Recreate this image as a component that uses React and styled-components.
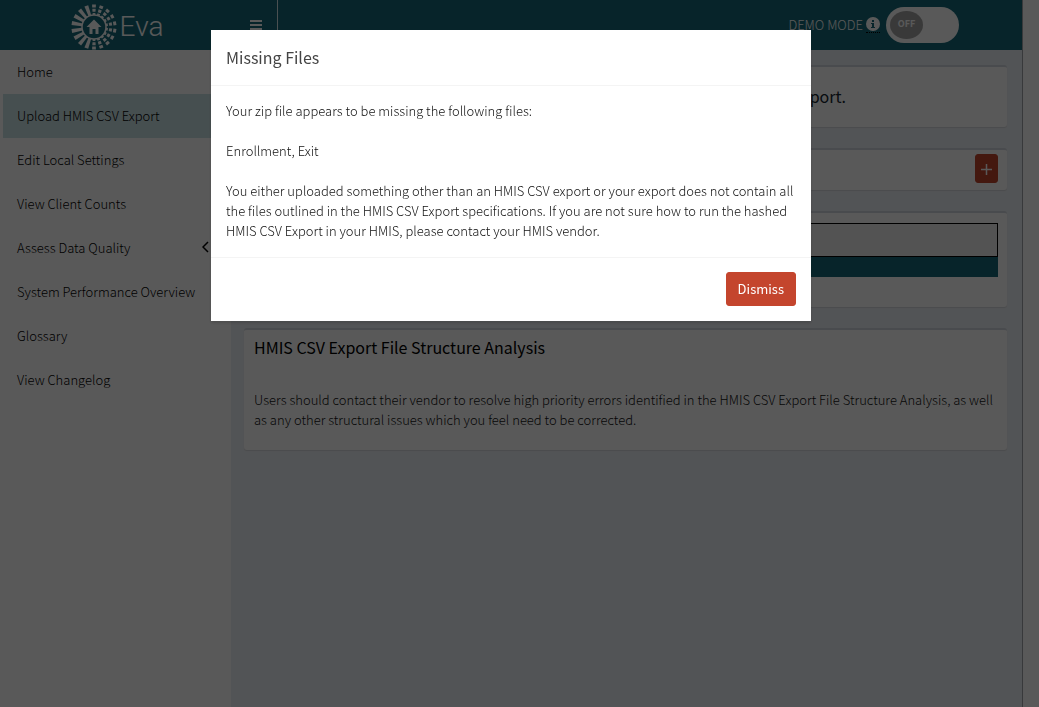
import React from "react";
import styled, { createGlobalStyle } from "styled-components";

const GlobalStyle = createGlobalStyle`
  *, *::before, *::after { box-sizing: border-box; }
  html { height: 100%; }
  body {
    margin: 0;
    min-height: 100%;
    background: #ffffff;
    color: #111111;
    font-family: "Source Sans Pro", "Noto Sans CJK SC", "Open Sans", sans-serif;
    font-size: 13px;
    font-weight: 300;
    line-height: 20px;
  }
  h1, h2, p { margin: 0; font-size: inherit; font-weight: inherit; }
  button, input { font: inherit; }
`;

const Page = styled.div`
  display: flex;
  flex-direction: column;
  min-height: 100vh;
  margin-right: 16px;
  border-right: 1px solid #a0a4a8;
`;

const Header = styled.header`
  display: flex;
  height: 50px;
  background: #16697a;
  color: #ffffff;
`;

const Brand = styled.a`
  display: flex;
  align-items: center;
  justify-content: center;
  gap: 3px;
  width: 232px;
  padding: 3px 0 0 2px;
  color: inherit;
  font-family: Roboto, sans-serif;
  font-size: 28px;
  font-weight: 300;
  text-decoration: none;
`;

const Navbar = styled.div`
  display: flex;
  flex: 1;
  justify-content: space-between;
`;

const MenuButton = styled.button`
  display: flex;
  align-items: center;
  justify-content: center;
  width: 46px;
  padding: 0 0 0 2px;
  border: 0;
  border-right: 1px solid #d5e4e7;
  background: transparent;
  color: inherit;
`;

const DemoMode = styled.div`
  display: flex;
  align-items: center;
  gap: 3px;
  padding-right: 63px;
`;

const InfoMark = styled.span`
  display: flex;
  padding-bottom: 1px;
  border-bottom: 1px dotted #000000;
`;

const Switch = styled.label`
  display: flex;
  align-items: center;
  width: 73px;
  height: 36px;
  margin-left: 3px;
  padding: 0 4px;
  border-radius: 18px;
  background: #ffffff;
`;

const SwitchInput = styled.input`
  position: absolute;
  opacity: 0;
`;

const Knob = styled.span`
  display: flex;
  align-items: center;
  justify-content: center;
  width: 33px;
  height: 28px;
  padding-bottom: 2px;
  border-radius: 50%;
  background: #a4a4a4;
  color: #ffffff;
  font-size: 9px;
  font-weight: 700;
`;

const Body = styled.div`
  display: flex;
  flex: 1;
`;

const Sidebar = styled.nav`
  flex: 0 0 231px;
  background: #ffffff;
`;

const NavLink = styled.a`
  display: flex;
  align-items: center;
  justify-content: space-between;
  height: 44px;
  padding: 0 22px 0 14px;
  border-left: 3px solid transparent;
  background: ${(p) => (p.$active ? "#c9e1e5" : "transparent")};
  background-clip: padding-box;
  color: #000000;
  text-decoration: none;
`;

const Main = styled.main`
  display: flex;
  flex: 1;
  flex-direction: column;
  gap: 21px;
  min-width: 0;
  padding: 15px 15px 15px 13px;
  background: #ecf0f5;
`;

const Box = styled.section`
  padding: ${(p) => p.$pad || "10px"};
  border-top: 2px solid #d2d6de;
  border-radius: 3px;
  background: #ffffff;
  box-shadow: 0 1px 1px rgba(0, 0, 0, 0.1);
`;

const BoxTitle = styled.h2`
  color: #000000;
  font-size: 16px;
  font-weight: 400;
  line-height: 20px;
`;

const Intro = styled(BoxTitle)`
  padding: 9px 0 11px;
  color: #16262f;
  text-align: center;
`;

const CollapsedHeader = styled.div`
  display: flex;
  justify-content: flex-end;
`;

const ExpandButton = styled.button`
  display: flex;
  align-items: center;
  justify-content: center;
  width: 23px;
  height: 29px;
  padding: 1px 0 0;
  border: 1px solid #c4452d;
  border-radius: 3px;
  background: #c4452d;
  color: #ffffff;
`;

const FileInput = styled.input`
  display: block;
  width: 100%;
  height: 34px;
  padding: 6px 12px;
  border: 1px solid #000000;
  background: #eeeeee;
`;

const Progress = styled.div`
  height: 20px;
  background: #16697a;
`;

const BoxText = styled.p`
  padding-top: 33px;
`;

const Overlay = styled.div`
  position: fixed;
  inset: 0;
  display: flex;
  align-items: flex-start;
  justify-content: center;
  padding: 30px 17px 30px 0;
  background: rgba(0, 0, 0, 0.65);
`;

const Dialog = styled.div`
  width: 600px;
  max-width: 100%;
  background: #ffffff;
  box-shadow: 0 2px 3px rgba(0, 0, 0, 0.15);
`;

const DialogHeader = styled.div`
  padding: 17px 15px 18px;
  border-bottom: 1px solid #f4f4f4;
`;

const DialogTitle = styled.h1`
  color: #444444;
  font-size: 16px;
  font-weight: 400;
`;

const DialogBody = styled.div`
  display: flex;
  flex-direction: column;
  gap: 20px;
  padding: 15px 15px 16px;
`;

const DialogFooter = styled.div`
  display: flex;
  justify-content: flex-end;
  padding: 14px 15px 15px;
  border-top: 1px solid #f4f4f4;
`;

const DismissButton = styled.button`
  height: 34px;
  padding: 0 11px;
  border: 1px solid #c4452d;
  border-radius: 3px;
  background: #c4452d;
  color: #ffffff;
  font-weight: 400;
`;

const RAYS = 18;

function SunLogo() {
  return (
    <svg width="46" height="46" viewBox="-23 -23 46 46" aria-hidden="true">
      <circle r="12" fill="none" stroke="currentColor" strokeWidth="1.500" />
      {Array.from({ length: RAYS }, (_, i) => {
        const angle = (i * 360) / RAYS;
        const segmented = angle < 190;
        return (
          <path
            key={angle}
            d={
              segmented
                ? "M-1.300-12H1.300L1.400-14H-1.400ZM-1.500-15.200H1.500L1.700-18.200H-1.700ZM-1.800-19.500H1.800L1.900-22.500H-1.900Z"
                : "M-1.400-12H1.400L2-22.500H-2Z"
            }
            fill="currentColor"
            transform={`rotate(${angle})`}
          />
        );
      })}
      <path d="M0-7.500 7.500 0H4.500V7H1.500V2H-1.500V7H-4.500V0H-7.500Z" fill="currentColor" />
    </svg>
  );
}

function Bars() {
  return (
    <svg width="12" height="12" viewBox="0 0 12 12" aria-hidden="true">
      <path d="M0 2H12M0 6H12M0 10H12" stroke="currentColor" strokeWidth="2" />
    </svg>
  );
}

function InfoIcon() {
  return (
    <svg width="14" height="14" viewBox="0 0 14 14" aria-hidden="true">
      <circle cx="7" cy="7" r="7" fill="#ffffff" />
      <path d="M6 3H8V5H6ZM5 6H8V10H9V11H5V10H6V7H5Z" fill="#16697a" />
    </svg>
  );
}

function ChevronLeft() {
  return (
    <svg width="7" height="14" viewBox="0 0 7 14" aria-hidden="true">
      <path d="M6 1 1 6 6 11" fill="none" stroke="currentColor" strokeWidth="1.500" />
    </svg>
  );
}

function Plus() {
  return (
    <svg width="11" height="11" viewBox="0 0 11 11" aria-hidden="true">
      <path d="M5.500 0V11M0 5.500H11" stroke="currentColor" strokeWidth="1.500" />
    </svg>
  );
}

const NAV_ITEMS = [
  { label: "Home" },
  { label: "Upload HMIS CSV Export", active: true },
  { label: "Edit Local Settings" },
  { label: "View Client Counts" },
  { label: "Assess Data Quality", expandable: true },
  { label: "System Performance Overview" },
  { label: "Glossary" },
  { label: "View Changelog" },
];

export default function App() {
  return (
    <>
      <GlobalStyle />
      <Page>
        <Header>
          <Brand href="#home">
            <SunLogo />
            Eva
          </Brand>
          <Navbar>
            <MenuButton type="button" aria-label="Toggle navigation">
              <Bars />
            </MenuButton>
            <DemoMode>
              <span>DEMO MODE</span>
              <InfoMark>
                <InfoIcon />
              </InfoMark>
              <Switch>
                <SwitchInput type="checkbox" aria-label="Demo mode" />
                <Knob>OFF</Knob>
              </Switch>
            </DemoMode>
          </Navbar>
        </Header>
        <Body>
          <Sidebar>
            {NAV_ITEMS.map((item) => (
              <NavLink key={item.label} href="#" $active={item.active}>
                {item.label}
                {item.expandable && <ChevronLeft />}
              </NavLink>
            ))}
          </Sidebar>
          <Main>
            <Box>
              <Intro>To get started, please upload your hashed HMIS CSV Export.</Intro>
            </Box>
            <Box $pad="4px 9px 7px">
              <CollapsedHeader>
                <ExpandButton type="button" aria-label="Expand">
                  <Plus />
                </ExpandButton>
              </CollapsedHeader>
            </Box>
            <Box $pad="10px 9px 30px">
              <FileInput type="text" readOnly aria-label="Selected file" />
              <Progress />
            </Box>
            <Box $pad="7px 10px 20px">
              <BoxTitle>HMIS CSV Export File Structure Analysis</BoxTitle>
              <BoxText>
                Users should contact their vendor to resolve high priority errors identified in the
                HMIS CSV Export File Structure Analysis, as well as any other structural issues which
                you feel need to be corrected.
              </BoxText>
            </Box>
          </Main>
        </Body>
      </Page>
      <Overlay>
        <Dialog role="dialog" aria-modal="true" aria-labelledby="dialog-title">
          <DialogHeader>
            <DialogTitle id="dialog-title">Missing Files</DialogTitle>
          </DialogHeader>
          <DialogBody>
            <p>Your zip file appears to be missing the following files:</p>
            <p>Enrollment, Exit</p>
            <p>
              You either uploaded something other than an HMIS CSV export or your export does not
              contain all the files outlined in the HMIS CSV Export specifications. If you are not
              sure how to run the hashed HMIS CSV Export in your HMIS, please contact your HMIS
              vendor.
            </p>
          </DialogBody>
          <DialogFooter>
            <DismissButton type="button">Dismiss</DismissButton>
          </DialogFooter>
        </Dialog>
      </Overlay>
    </>
  );
}
